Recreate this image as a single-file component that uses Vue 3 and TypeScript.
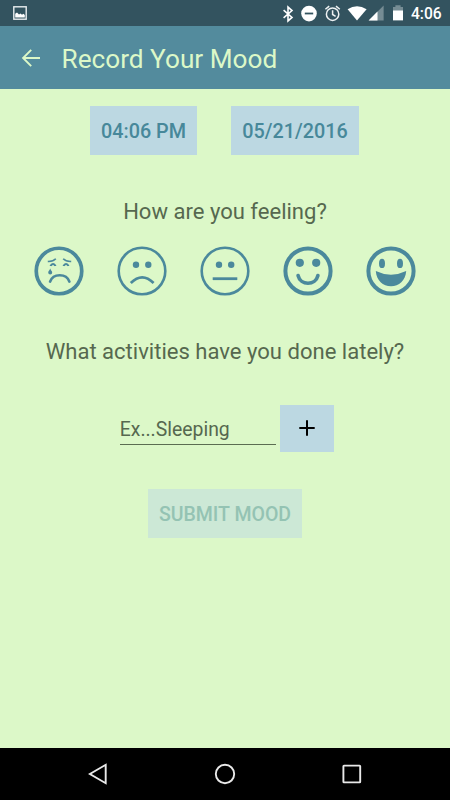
<script setup lang="ts">
import { ref } from 'vue'

const time = ref('04:06 PM')
const date = ref('05/21/2016')
const activity = ref('')
const moods = ['awful', 'bad', 'neutral', 'good', 'great'] as const
const rings: Record<(typeof moods)[number], number> = {
  awful: 3.7,
  bad: 2.6,
  neutral: 2.6,
  good: 4,
  great: 4,
}
</script>

<template>
  <div class="screen">
    <div class="status">
      <svg class="picture" width="14" height="14" viewBox="0 0 14 14">
        <rect x="0.8" y="0.8" width="12.4" height="12.4" fill="none" stroke="#e8edef" stroke-width="1.4" />
        <path d="M2.2 11.5V7.8L4 6.5l2 2 1.5-1L9 8.7l1.4-1 1.4 1.2v2.6z" fill="#fff" />
      </svg>
      <svg class="indicators" width="126" height="20" viewBox="0 0 126 20">
        <path d="M1.4 6.2l8.4 7.2-4 3.5V3.1l4 3.5-8.4 7.2" transform="translate(.2 0)" fill="none" stroke="#fff" stroke-width="1.6" />
        <circle cx="27" cy="9.6" r="7.8" fill="#fff" />
        <path d="M22.8 9.5h8.4" stroke="#33535f" stroke-width="1.8" />
        <g fill="none" stroke="#eef2f3" stroke-width="1.5">
          <circle cx="50.6" cy="10.2" r="6.2" />
          <path d="M50.6 6.3v4.2l3 1.8M43.4 5.3l3.8-3.2M57.8 5.3l-3.8-3.2" />
        </g>
        <path d="M65.6 5.2Q75-.9 84.6 5.2L75 16.5z" fill="#fff" />
        <path d="M101.6 1.4v15H86.6z" fill="#768c94" />
        <path d="M95.5 7.5v8.9h-8.9z" fill="#fff" />
        <path d="M111 3.1h2.4V1.3h5.2v1.8h2.4v4h-10z" fill="#768c94" />
        <path d="M111 6.5h10v9.9h-10z" fill="#fff" />
      </svg>
      <span class="clock">4:06</span>
    </div>

    <header class="appbar">
      <svg width="20" height="20" viewBox="0 0 20 20">
        <path d="M19 10H2.5M10.2 1.9L2.1 10l8.1 8.1" fill="none" stroke="#dcf8c8" stroke-width="1.9" />
      </svg>
      <h1>Record Your Mood</h1>
    </header>

    <main>
      <div class="when">
        <button class="btn time">{{ time }}</button>
        <button class="btn date">{{ date }}</button>
      </div>

      <p class="question feeling">How are you feeling?</p>

      <div class="moods">
        <svg v-for="mood in moods" :key="mood" class="face" width="50" height="50" viewBox="0 0 50 50">
          <circle class="line" cx="25" cy="25" :r="24.6 - rings[mood] / 2" :stroke-width="rings[mood]" />
          <template v-if="mood === 'awful'">
            <g class="line" stroke-width="1.6">
              <path d="M13.8 15.4Q19 15.7 21.8 12.7M37.2 15.4Q32 15.7 29.2 12.7" />
              <path d="M16.8 20v-.4q2.3-3.2 4.4 0v.4M29.8 20v-.4q2.3-3.2 4.4 0v.4" stroke-width="2" />
            </g>
            <path d="M16.2 22.6C15.6 24.8 14.2 25 14.2 26.5a2 2 0 0 0 4 0C18.2 25 16.8 24.8 16.2 22.6z" />
            <path class="line round" d="M16.1 35.6C19.2 27.1 32.3 27.1 35.4 35.6" stroke-width="2.7" />
          </template>
          <template v-else-if="mood === 'bad'">
            <circle cx="19" cy="18.8" r="3.2" />
            <circle cx="31.3" cy="18.8" r="3.2" />
            <path class="line" d="M13.8 37Q25.2 25.6 36.6 37" stroke-width="2.7" />
          </template>
          <template v-else-if="mood === 'neutral'">
            <circle cx="19" cy="18.8" r="3.2" />
            <circle cx="31.2" cy="18.8" r="3.2" />
            <path class="line" d="M12.7 32.7h24.6" stroke-width="2.8" />
          </template>
          <template v-else-if="mood === 'good'">
            <circle cx="16.8" cy="16.8" r="4.1" />
            <circle cx="33.2" cy="16.8" r="4.1" />
            <path class="line round" d="M15.1 29.6C17.5 39.8 32.5 39.8 34.9 29.6" stroke-width="3.7" />
          </template>
          <template v-else>
            <ellipse cx="16" cy="17.4" rx="3" ry="4.7" />
            <ellipse cx="34" cy="17.4" rx="3" ry="4.7" />
            <path d="M9.8 25Q25 32.4 40.2 25C39.5 34.6 33 40.2 25 40.2S10.5 34.6 9.8 25z" />
          </template>
        </svg>
      </div>

      <p class="question doing">What activities have you done lately?</p>

      <div class="entry">
        <input v-model="activity" type="text" placeholder="Ex...Sleeping" />
        <button class="btn add" aria-label="Add activity">
          <svg width="16" height="16" viewBox="0 0 16 16">
            <path d="M8 .3v15.4M.3 8h15.4" stroke="#000" stroke-width="2" />
          </svg>
        </button>
      </div>

      <button class="btn submit" disabled>SUBMIT MOOD</button>
    </main>

    <nav class="navbar">
      <svg width="20" height="22" viewBox="0 0 20 22">
        <path d="M17.7 1.8v18.4L1.9 11z" />
      </svg>
      <svg width="22" height="22" viewBox="0 0 22 22">
        <circle cx="11" cy="11" r="9.2" />
      </svg>
      <svg width="20" height="22" viewBox="0 0 20 22">
        <rect x="1.4" y="2.6" width="16.8" height="16.8" rx=".6" />
      </svg>
    </nav>
  </div>
</template>

<style>
body {
  margin: 0;
}
</style>

<style scoped>
.screen {
  width: 450px;
  height: 800px;
  display: flex;
  flex-direction: column;
  overflow: hidden;
  background: #dcf8c8;
  font-family: Roboto, sans-serif;
}
svg {
  display: block;
  flex: none;
}
.status {
  height: 26px;
  flex: none;
  display: flex;
  align-items: center;
  padding: 0 9px 0 13px;
  background: #33535f;
}
.indicators {
  margin: 2px 0 0 255px;
}
.clock {
  margin: 2px 0 0 3px;
  font-size: 15.6px;
  font-weight: 500;
  line-height: 24px;
  color: #fff;
}
.appbar {
  height: 62.5px;
  flex: none;
  display: flex;
  align-items: center;
  padding-left: 21px;
  background: #538b9d;
}
.appbar svg {
  margin-top: 1px;
}
h1 {
  margin: 4px 0 0 20.5px;
  font-size: 26.2px;
  font-weight: 400;
  line-height: 32px;
  white-space: nowrap;
  color: #dcf8c8;
}
main {
  flex: 1;
  display: flex;
  flex-direction: column;
  align-items: center;
}
.when {
  display: flex;
  gap: 34px;
  margin: 17.5px 1px 0 0;
}
.btn {
  display: flex;
  align-items: center;
  justify-content: center;
  flex: none;
  box-sizing: border-box;
  margin: 0;
  padding: 3px 0 0;
  border: 0;
  background: #bcd8e2;
  color: #47889a;
  font: 500 19.8px/24px Roboto, sans-serif;
  white-space: nowrap;
}
.time {
  width: 107px;
  height: 49px;
}
.date {
  width: 128px;
  height: 49px;
}
.question {
  margin: 0;
  font-size: 22.05px;
  line-height: 28px;
  white-space: nowrap;
  color: #56684f;
}
.feeling {
  margin-top: 43px;
}
.moods {
  display: flex;
  gap: 33px;
  margin-top: 20px;
}
.face {
  fill: #4b899c;
}
.line {
  fill: none;
  stroke: #4b899c;
}
.round {
  stroke-linecap: round;
}
.doing {
  margin-top: 42px;
}
.entry {
  display: flex;
  gap: 4.5px;
  margin: 38.6px 0 0 4px;
}
input {
  width: 156px;
  height: 40px;
  box-sizing: border-box;
  padding: 12px 0 1px;
  border: 0;
  border-bottom: 1px solid #5b6d51;
  border-radius: 0;
  outline: 0;
  background: transparent;
  font: 400 19.4px/26px Roboto, sans-serif;
  color: #56684f;
}
input::placeholder {
  color: #56684f;
  opacity: 1;
}
.add {
  width: 54px;
  height: 47.4px;
  padding: 0;
}
.submit {
  width: 154.5px;
  height: 49px;
  margin-top: 37px;
  padding-top: 4px;
  background: #cce8d6;
  color: #94c3b3;
  font-size: 19.5px;
}
.navbar {
  height: 52px;
  flex: none;
  display: flex;
  align-items: center;
  justify-content: center;
  gap: 106px;
  background: #000;
}
.navbar svg {
  fill: none;
  stroke: #e9e9e9;
  stroke-width: 1.9;
}
</style>
